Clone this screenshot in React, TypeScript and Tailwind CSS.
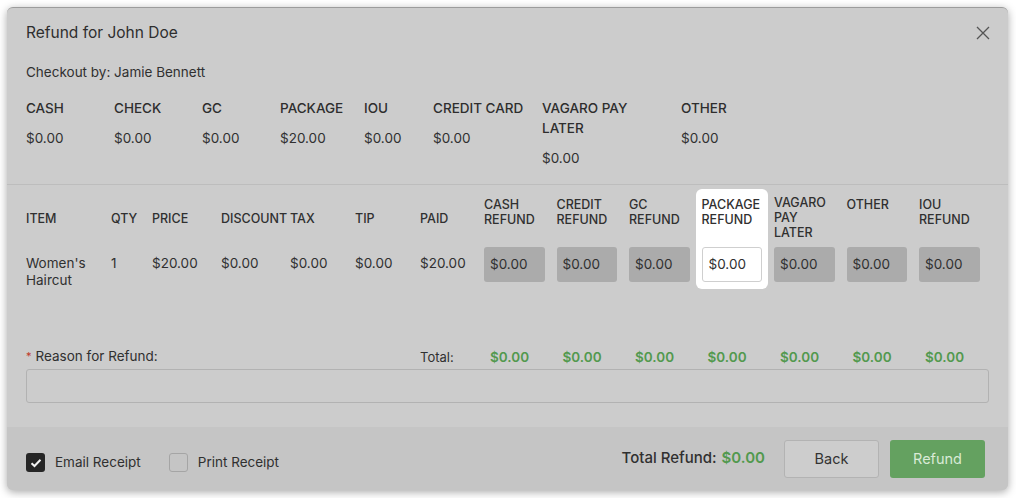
import React from "react";

const payments: { label: React.ReactNode; value: string; w: string }[] = [
  { label: "CASH", value: "$0.00", w: "w-[88px]" },
  { label: "CHECK", value: "$0.00", w: "w-[88px]" },
  { label: "GC", value: "$0.00", w: "w-[78px]" },
  { label: "PACKAGE", value: "$20.00", w: "w-[84px]" },
  { label: "IOU", value: "$0.00", w: "w-[69px]" },
  { label: "CREDIT CARD", value: "$0.00", w: "w-[109px]" },
  { label: <>VAGARO PAY<br />LATER</>, value: "$0.00", w: "w-[139px]" },
  { label: "OTHER", value: "$0.00", w: "w-[100px]" },
];

const plain: { h: string; v: React.ReactNode; w: string }[] = [
  { h: "ITEM", v: <>Women's<br />Haircut</>, w: "w-[85px]" },
  { h: "QTY", v: "1", w: "w-[41px]" },
  { h: "PRICE", v: "$20.00", w: "w-[69px]" },
  { h: "DISCOUNT", v: "$0.00", w: "w-[69px]" },
  { h: "TAX", v: "$0.00", w: "w-[65px]" },
  { h: "TIP", v: "$0.00", w: "w-[65px]" },
  { h: "PAID", v: "$20.00", w: "w-[58px]" },
];

const refunds: { h: React.ReactNode; active?: boolean; pt: string }[] = [
  { h: <>CASH<br />REFUND</>, pt: "pt-[8px]" },
  { h: <>CREDIT<br />REFUND</>, pt: "pt-[8px]" },
  { h: <>GC<br />REFUND</>, pt: "pt-[8px]" },
  { h: <>PACKAGE<br />REFUND</>, active: true, pt: "pt-[8px]" },
  { h: <>VAGARO<br />PAY<br />LATER</>, pt: "pt-[6px]" },
  { h: <>OTHER</>, pt: "pt-[8px]" },
  { h: <>IOU<br />REFUND</>, pt: "pt-[8px]" },
];

export default function App() {
  return (
    <div className="w-[1016px] h-[498px] bg-white p-[7px] font-['Inter',sans-serif] text-[#303030] overflow-hidden">
      <div className="w-[1001px] h-[483px] bg-[#cccccc] rounded-[6px] border-t border-[#9c9c9c] shadow-[0_2px_8px_rgba(0,0,0,0.35)] flex flex-col overflow-hidden">
        {/* header */}
        <div className="h-[49px] flex items-center justify-between pl-[19px] pr-[18px]">
          <div className="text-[15.5px] text-[#2e2e2e]">Refund for John Doe</div>
          <svg width="14" height="14" viewBox="0 0 14 14" className="text-[#555]">
            <path d="M1 1 L13 13 M13 1 L1 13" stroke="currentColor" strokeWidth="1.3" fill="none" />
          </svg>
        </div>
        <div className="mt-[5px] pl-[19px] h-[20px] leading-[20px] text-[13.5px]">Checkout by: Jamie Bennett</div>

        {/* payment summary */}
        <div className="mt-[16px] pl-[19px] flex pb-[16px]">
          {payments.map((p, i) => (
            <div key={i} className={`${p.w} flex flex-col`}>
              <div className="text-[13.5px] font-medium leading-[20px] text-[#2e2e2e]">{p.label}</div>
              <div className="mt-[10px] text-[13.5px] leading-[20px]">{p.value}</div>
            </div>
          ))}
        </div>
        <div className="h-px bg-[#bdbdbd]" />

        {/* items */}
        <div className="mt-[4px] pl-[19px] flex text-[12.5px]">
          {plain.map((c, i) => (
            <div key={i} className={`${c.w} flex flex-col`}>
              <div className="h-[58px] pt-[22px] leading-[15px] font-medium">{c.h}</div>
              <div className="pt-[8px] leading-[17px] text-[13.5px]">{c.v}</div>
            </div>
          ))}
          {refunds.map((r, i) => (
            <div
              key={i}
              className={`w-[72.5px] px-[6px] pb-[7px] flex flex-col rounded-[6px] ${r.active ? "bg-white" : ""}`}
            >
              <div className={`h-[58px] ${r.pt} leading-[15px] font-medium`}>{r.h}</div>
              <div
                className={`h-[35px] rounded-[3px] flex items-center pl-[6px] text-[13.5px] ${
                  r.active ? "bg-white border border-[#cfcfcf]" : "bg-[#ababab]"
                }`}
              >
                $0.00
              </div>
            </div>
          ))}
        </div>

        {/* totals */}
        <div className="mt-[58px] pl-[19px] flex items-end h-[20px]">
          <div className="w-[394px] text-[13.5px] leading-[18px] pb-[2px]">
            <span className="text-[#c0392b] text-[11px] align-top mr-[4px]">*</span>Reason for Refund:
          </div>
          <div className="w-[58px] text-[13px] leading-[20px] pt-[4px]">Total:</div>
          {refunds.map((_, i) => (
            <div key={i} className="w-[72.5px] pl-[12px] text-[13.5px] font-semibold text-[#52994e] leading-[20px]">
              $0.00
            </div>
          ))}
        </div>
        <div className="mx-[19px] mt-[2px] h-[34px] rounded-[3px] border border-[#b2b2b2]" />

        {/* footer */}
        <div className="mt-auto h-[63px] bg-[#c5c5c5] flex items-center pl-[19px] pr-[23px]">
          <div className="flex items-center mt-[8px]">
            <div className="w-[19px] h-[19px] rounded-[3px] bg-[#262626] flex items-center justify-center">
              <svg width="12" height="10" viewBox="0 0 12 10">
                <path d="M1.5 5.2 L4.5 8 L10.5 1.8" stroke="#f2f2f2" strokeWidth="2" fill="none" />
              </svg>
            </div>
            <span className="ml-[10px] text-[13.5px]">Email Receipt</span>
            <div className="ml-[28px] w-[19px] h-[19px] rounded-[3px] border border-[#a5a5a5]" />
            <span className="ml-[10px] text-[13.5px]">Print Receipt</span>
          </div>
          <div className="ml-auto flex items-center">
            <span className="text-[15px] font-medium">Total Refund:</span>
            <span className="ml-[5px] text-[15px] font-semibold text-[#52994e]">$0.00</span>
            <button className="ml-[19px] w-[95px] h-[38px] rounded-[3px] bg-[#cdcdcd] border border-[#b3b3b3] text-[14.5px] text-[#333]">
              Back
            </button>
            <button className="ml-[11px] w-[95px] h-[38px] rounded-[3px] bg-[#64a160] text-[14.5px] text-[#d9ead6]">
              Refund
            </button>
          </div>
        </div>
      </div>
    </div>
  );
}
